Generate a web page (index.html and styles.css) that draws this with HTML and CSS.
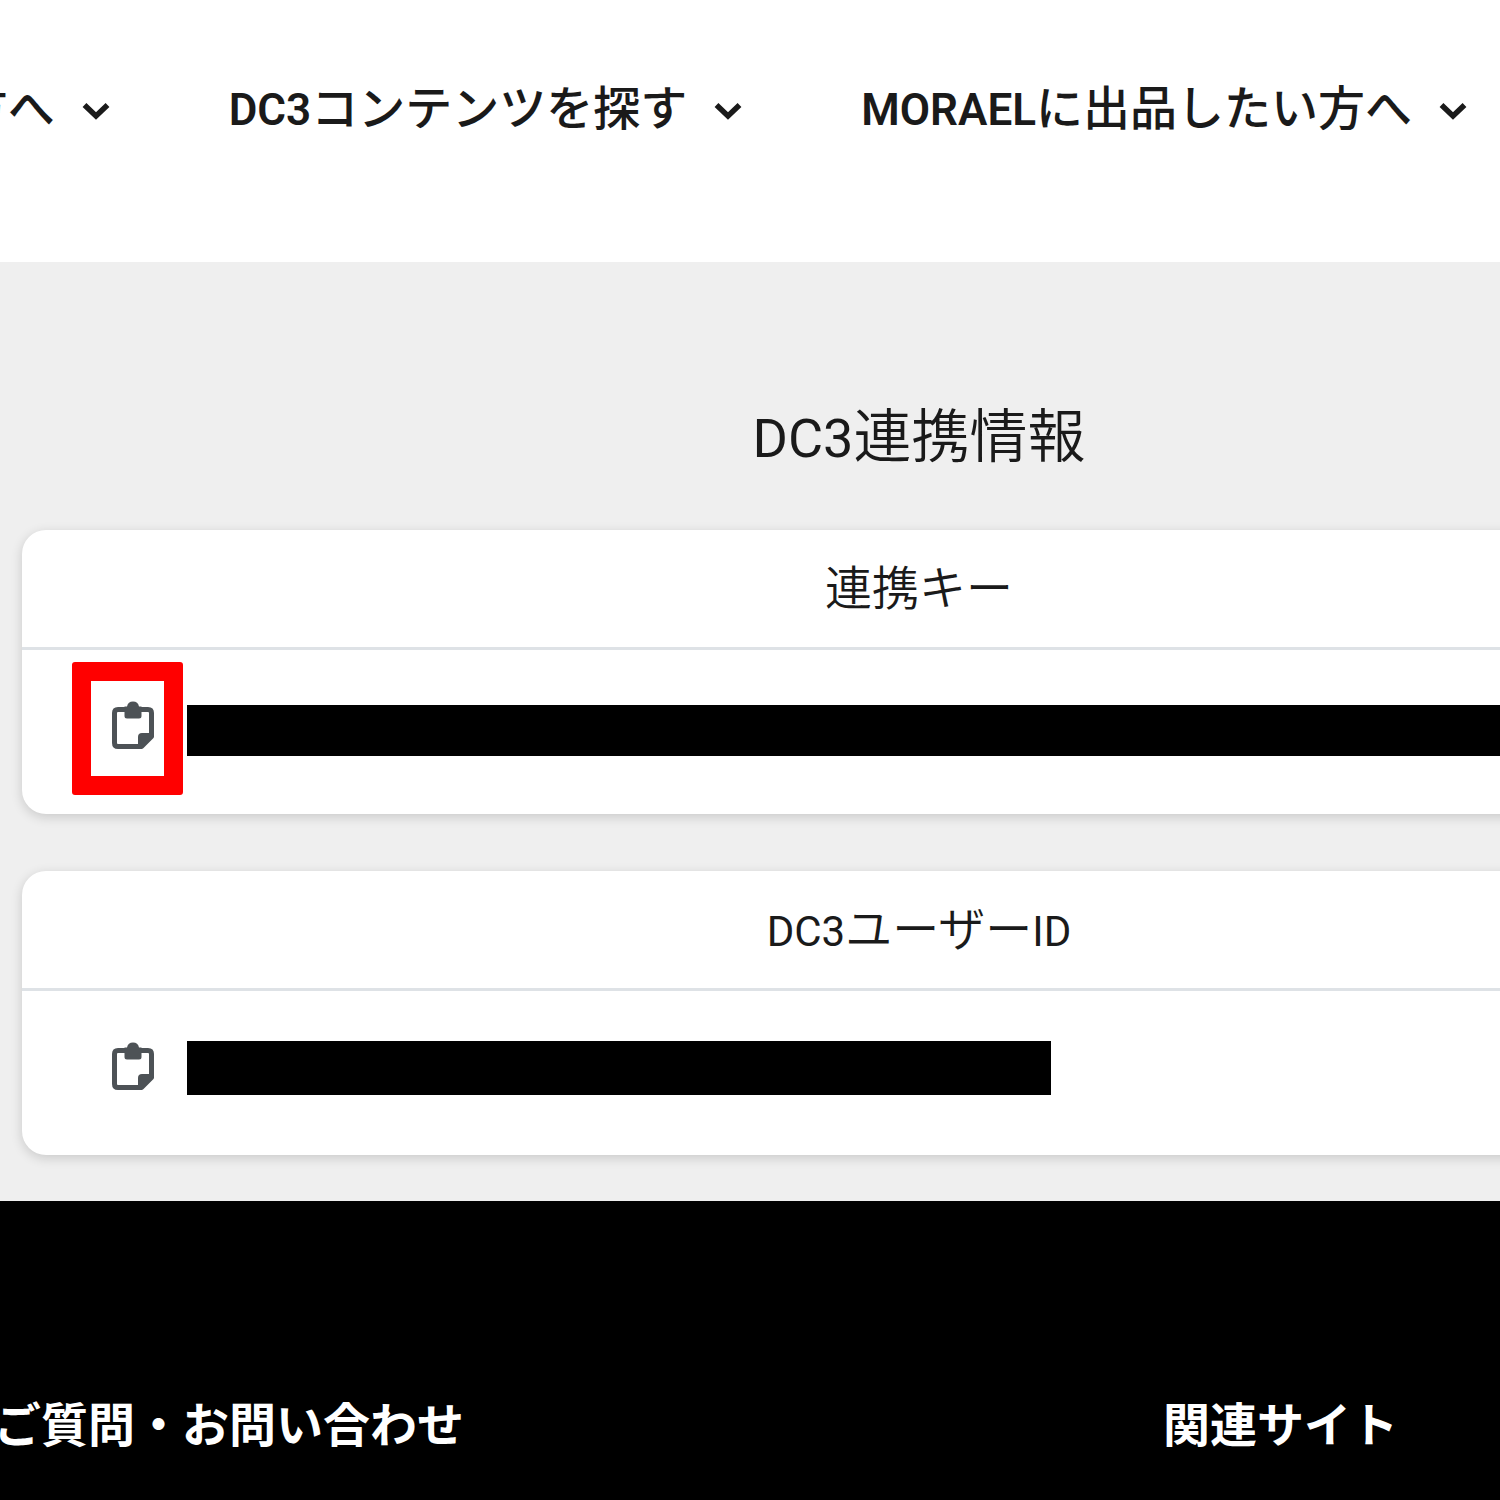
FILE: index.html
```html
<!DOCTYPE html>
<html lang="ja">
<head>
<meta charset="utf-8">
<meta name="viewport" content="width=device-width, initial-scale=1">
<title>DC3連携情報</title>
<link rel="stylesheet" href="styles.css">
</head>
<body>
<svg class="sprite" aria-hidden="true">
  <symbol id="chevron" viewBox="0 0 28 20">
    <path d="M2.500 4 L14 15 L25.500 4" fill="none" stroke="currentColor" stroke-width="5.500"/>
  </symbol>
  <symbol id="clipboard" viewBox="0 0 44 50">
    <path d="M7 9.500 H37 Q40.500 9.500 40.500 13 V36.500 L30.500 46.500 H7 Q3.500 46.500 3.500 43 V13 Q3.500 9.500 7 9.500 Z" fill="none" stroke="currentColor" stroke-width="5" stroke-linejoin="round"/>
    <path d="M27 47 V37 Q27 33 31 33 H41 V37 L31 47 Z" fill="currentColor"/>
    <path d="M13.500 6.500 H16 Q17 1.500 22 1.500 Q27 1.500 28 6.500 H30.500 V16 Q30.500 18.500 28 18.500 H16 Q13.500 18.500 13.500 16 Z" fill="currentColor"/>
  </symbol>
</svg>
<header class="header">
  <nav class="nav">
    <a class="nav-item" href="#"><span>方へ</span><svg class="chevron"><use href="#chevron"/></svg></a>
    <a class="nav-item" href="#"><span><span class="latin">DC3</span>コンテンツを探す</span><svg class="chevron"><use href="#chevron"/></svg></a>
    <a class="nav-item" href="#"><span><span class="latin">MORAEL</span>に出品したい方へ</span><svg class="chevron"><use href="#chevron"/></svg></a>
  </nav>
</header>
<main class="main">
  <div class="content">
    <h1 class="title"><span class="latin">DC3</span>連携情報</h1>
    <section class="card">
      <h2 class="card-title">連携キー</h2>
      <div class="card-body">
        <button class="copy marked" type="button" aria-label="連携キーをコピー"><svg class="clipboard"><use href="#clipboard"/></svg></button>
        <div class="redacted redacted-key"></div>
      </div>
    </section>
    <section class="card">
      <h2 class="card-title"><span class="latin">DC3</span>ユーザー<span class="latin">ID</span></h2>
      <div class="card-body">
        <button class="copy" type="button" aria-label="ユーザーIDをコピー"><svg class="clipboard"><use href="#clipboard"/></svg></button>
        <div class="redacted redacted-id"></div>
      </div>
    </section>
  </div>
</main>
<footer class="footer">
  <h2 class="footer-title">ご質問・お問い合わせ</h2>
  <h2 class="footer-title">関連サイト</h2>
</footer>
</body>
</html>
```

FILE: styles.css
```css
* {
  box-sizing: border-box;
}

body {
  margin: 0;
  min-height: 100vh;
  display: flex;
  flex-direction: column;
  overflow-x: hidden;
  background: #fff;
  color: #1a1a1a;
  font-family: "Noto Sans CJK JP", sans-serif;
}

h1,
h2 {
  margin: 0;
  white-space: nowrap;
}

.sprite {
  position: absolute;
  width: 0;
  height: 0;
}

.latin {
  font-family: Roboto, sans-serif;
  line-height: 1;
}

.header {
  overflow: hidden;
  padding: 69px 33px 121px 0;
}

.nav {
  display: flex;
  justify-content: flex-end;
  gap: 119px;
}

.nav-item {
  display: flex;
  flex: none;
  align-items: center;
  gap: 27px;
  color: inherit;
  font-size: 47px;
  font-weight: 500;
  line-height: 72px;
  text-decoration: none;
  white-space: nowrap;
}

.nav-item .latin {
  font-size: 44px;
  font-weight: 600;
}

.chevron {
  width: 28px;
  height: 20px;
  margin-top: 12px;
}

.main {
  overflow: hidden;
  background: #efefef;
}

/* The content column is wider than the window and runs off its right edge. */
.content {
  display: flex;
  flex-direction: column;
  gap: 57px;
  width: calc(100% + 338px);
  padding: 130px 22px 46px;
}

.title {
  font-size: 58px;
  font-weight: 350;
  line-height: 81px;
  text-align: center;
}

.title .latin {
  font-size: 54px;
  font-weight: 400;
}

.card {
  border-radius: 24px;
  background: #fff;
  box-shadow: 0 3px 12px rgba(0, 0, 0, 0.16);
}

.card-title {
  padding-bottom: 8px;
  border-bottom: 3px solid #dee2e6;
  font-size: 47px;
  font-weight: 350;
  line-height: 109px;
  text-align: center;
}

.card-title .latin {
  font-size: 42px;
  font-weight: 400;
}

.card-body {
  display: flex;
  align-items: flex-start;
  gap: 32px;
  height: 164px;
  padding: 50px 0 0 89px;
}

.copy {
  position: relative;
  flex: none;
  width: 44px;
  height: 50px;
  padding: 0;
  border: 0;
  background: none;
  color: #4d5256;
}

.clipboard {
  display: block;
  width: 44px;
  height: 50px;
}

.marked::after {
  content: "";
  position: absolute;
  inset: -38px -28px -45px -39px;
  border: 19px solid #f00;
  border-radius: 3px;
}

.redacted {
  background: #000;
}

.redacted-key {
  flex: 1;
  height: 51px;
  margin-top: 5px;
}

.redacted-id {
  width: 864px;
  height: 54px;
}

.footer {
  display: flex;
  flex: 1;
  gap: 699px;
  overflow: hidden;
  padding: 185px 0 40px;
  background: #000;
  color: #fff;
}

.footer-title {
  flex: none;
  font-size: 47px;
  font-weight: 700;
  line-height: 72px;
}

.footer-title:first-child {
  margin-left: -6px;
}
```
